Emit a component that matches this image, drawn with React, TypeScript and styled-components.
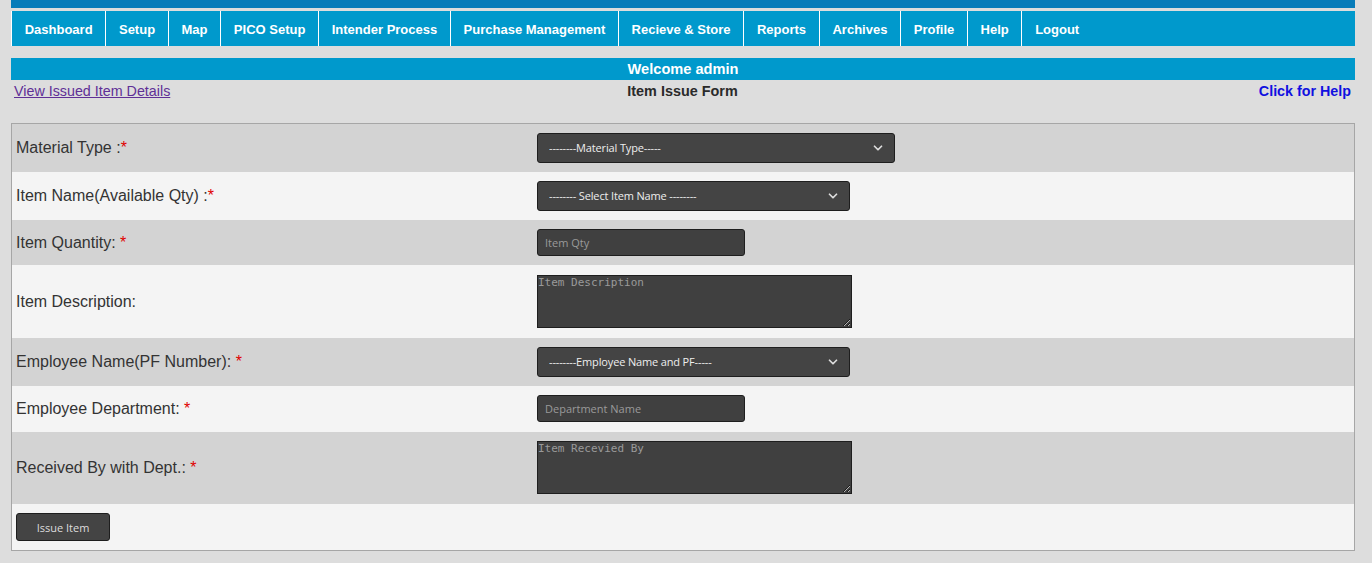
import React from "react";
import styled, { createGlobalStyle } from "styled-components";
import { ChevronDown } from "lucide-react";

const Global = createGlobalStyle`
  html, body { margin: 0; padding: 0; background: #dddddd; }
  body { font-family: "Liberation Sans", Arial, sans-serif; }
  * { box-sizing: border-box; }
`;

const Page = styled.div`
  width: 1344px;
  margin-left: 11px;
  display: flex;
  flex-direction: column;
`;

const TopBar = styled.div`
  height: 8px;
  background: #077cb9;
`;

const Nav = styled.nav`
  margin-top: 3px;
  height: 35px;
  background: #0099cc;
  display: flex;
  border-left: 1px solid #ffffff;
`;

const NavItem = styled.a`
  display: flex;
  align-items: center;
  padding: 1px 12.7px 0;
  border-right: 1px solid #ffffff;
  color: #ffffff;
  font-weight: bold;
  font-size: 13px;
  text-decoration: none;
  white-space: nowrap;
  &:last-child { border-right: none; }
`;

const Welcome = styled.div`
  margin-top: 12px;
  height: 22px;
  background: #0099cc;
  color: #ffffff;
  font-weight: bold;
  font-size: 14.6px;
  display: flex;
  align-items: center;
  justify-content: center;
`;

const InfoRow = styled.div`
  height: 22px;
  display: grid;
  grid-template-columns: 1fr auto 1fr;
  align-items: center;
  padding: 0 4px 0 3px;
`;

const IssuedLink = styled.a`
  color: #5f2f96;
  font-size: 14.3px;
  text-decoration: underline;
  justify-self: start;
`;

const FormTitle = styled.div`
  font-weight: bold;
  font-size: 14.4px;
  color: #2a2a2a;
`;

const HelpLink = styled.a`
  justify-self: end;
  color: #1010e0;
  font-weight: bold;
  font-size: 14.3px;
  text-decoration: none;
`;

const FormBox = styled.div`
  margin-top: 21px;
  border: 1px solid #a6a6a6;
  display: flex;
  flex-direction: column;
`;

const Row = styled.div<{ $alt?: boolean; $h: number }>`
  display: grid;
  grid-template-columns: 521px 1fr;
  align-items: center;
  height: ${(p) => p.$h}px;
  background: ${(p) => (p.$alt ? "#d3d3d3" : "#f4f4f4")};
`;

const Label = styled.div`
  padding-left: 4px;
  font-size: 16px;
  color: #333333;
`;

const Req = styled.span`
  color: #e00000;
`;

const Cell = styled.div<{ $shift?: number }>`
  padding-left: 4px;
  display: flex;
  align-items: center;
  margin-top: ${(p) => p.$shift ?? 0}px;
`;

const SelectWrap = styled.div<{ $w: number }>`
  position: relative;
  width: ${(p) => p.$w}px;
  height: 30px;
`;

const Select = styled.select`
  appearance: none;
  width: 100%;
  height: 100%;
  background: #444444;
  border: 1px solid #1e1e1e;
  border-radius: 3px;
  color: #eeeeee;
  font-family: "Open Sans", "Noto Sans", sans-serif;
  font-size: 11px;
  letter-spacing: -0.15px;
  padding: 0 30px 1px 11px;
  outline: none;
`;

const Chevron = styled.span`
  position: absolute;
  right: 10px;
  top: 50%;
  transform: translateY(-50%);
  display: flex;
  color: #dddddd;
  pointer-events: none;
`;

const TextInput = styled.input`
  width: 208px;
  height: 27px;
  background: #404040;
  border: 1px solid #1e1e1e;
  border-radius: 3px;
  color: #eeeeee;
  font-family: "Open Sans", "Noto Sans", sans-serif;
  font-size: 11px;
  padding: 0 7px;
  outline: none;
  &::placeholder { color: #9a9a9a; }
`;

const TextArea = styled.textarea`
  display: block;
  width: 315px;
  height: 53px;
  background: #404040;
  border: 1px solid #1e1e1e;
  border-radius: 0;
  color: #eeeeee;
  font-family: "DejaVu Sans Mono", "Liberation Mono", monospace;
  font-size: 11px;
  padding: 0 1px 1px 0;
  margin: 0;
  outline: none;
  &::placeholder { color: #9a9a9a; }
`;

const ButtonRow = styled.div`
  height: 46px;
  background: #f4f4f4;
  display: flex;
  align-items: center;
  padding-left: 4px;
`;

const Button = styled.button`
  width: 94px;
  height: 28px;
  background: #444444;
  border: 1px solid #1e1e1e;
  border-radius: 3px;
  color: #dddddd;
  font-family: "Open Sans", "Noto Sans", sans-serif;
  font-size: 11px;
  cursor: pointer;
`;

const navItems = [
  "Dashboard",
  "Setup",
  "Map",
  "PICO Setup",
  "Intender Process",
  "Purchase Management",
  "Recieve & Store",
  "Reports",
  "Archives",
  "Profile",
  "Help",
  "Logout",
];

const DarkSelect = ({ w, text }: { w: number; text: string }) => (
  <SelectWrap $w={w}>
    <Select defaultValue="">
      <option value="">{text}</option>
    </Select>
    <Chevron>
      <ChevronDown size={14} strokeWidth={3} />
    </Chevron>
  </SelectWrap>
);

export default function App() {
  return (
    <>
      <Global />
      <Page>
        <TopBar />
        <Nav>
          {navItems.map((n) => (
            <NavItem key={n} href="#">
              {n}
            </NavItem>
          ))}
        </Nav>
        <Welcome>Welcome admin</Welcome>
        <InfoRow>
          <IssuedLink href="#">View Issued Item Details</IssuedLink>
          <FormTitle>Item Issue Form</FormTitle>
          <HelpLink href="#">Click for Help</HelpLink>
        </InfoRow>
        <FormBox>
          <Row $alt $h={48}>
            <Label>
              Material Type :<Req>*</Req>
            </Label>
            <Cell>
              <DarkSelect w={358} text="--------Material Type-----" />
            </Cell>
          </Row>
          <Row $h={48}>
            <Label>
              Item Name(Available Qty) :<Req>*</Req>
            </Label>
            <Cell>
              <DarkSelect w={313} text="-------- Select Item Name --------" />
            </Cell>
          </Row>
          <Row $alt $h={45}>
            <Label>
              Item Quantity: <Req>*</Req>
            </Label>
            <Cell>
              <TextInput placeholder="Item Qty" />
            </Cell>
          </Row>
          <Row $h={73}>
            <Label>Item Description:</Label>
            <Cell>
              <TextArea placeholder="Item Description" />
            </Cell>
          </Row>
          <Row $alt $h={48}>
            <Label>
              Employee Name(PF Number): <Req>*</Req>
            </Label>
            <Cell>
              <DarkSelect w={313} text="--------Employee Name and PF-----" />
            </Cell>
          </Row>
          <Row $h={46}>
            <Label>
              Employee Department: <Req>*</Req>
            </Label>
            <Cell $shift={-1}>
              <TextInput placeholder="Department Name" />
            </Cell>
          </Row>
          <Row $alt $h={72}>
            <Label>
              Received By with Dept.: <Req>*</Req>
            </Label>
            <Cell $shift={-1}>
              <TextArea placeholder="Item Recevied By" />
            </Cell>
          </Row>
          <ButtonRow>
            <Button>Issue Item</Button>
          </ButtonRow>
        </FormBox>
      </Page>
    </>
  );
}
